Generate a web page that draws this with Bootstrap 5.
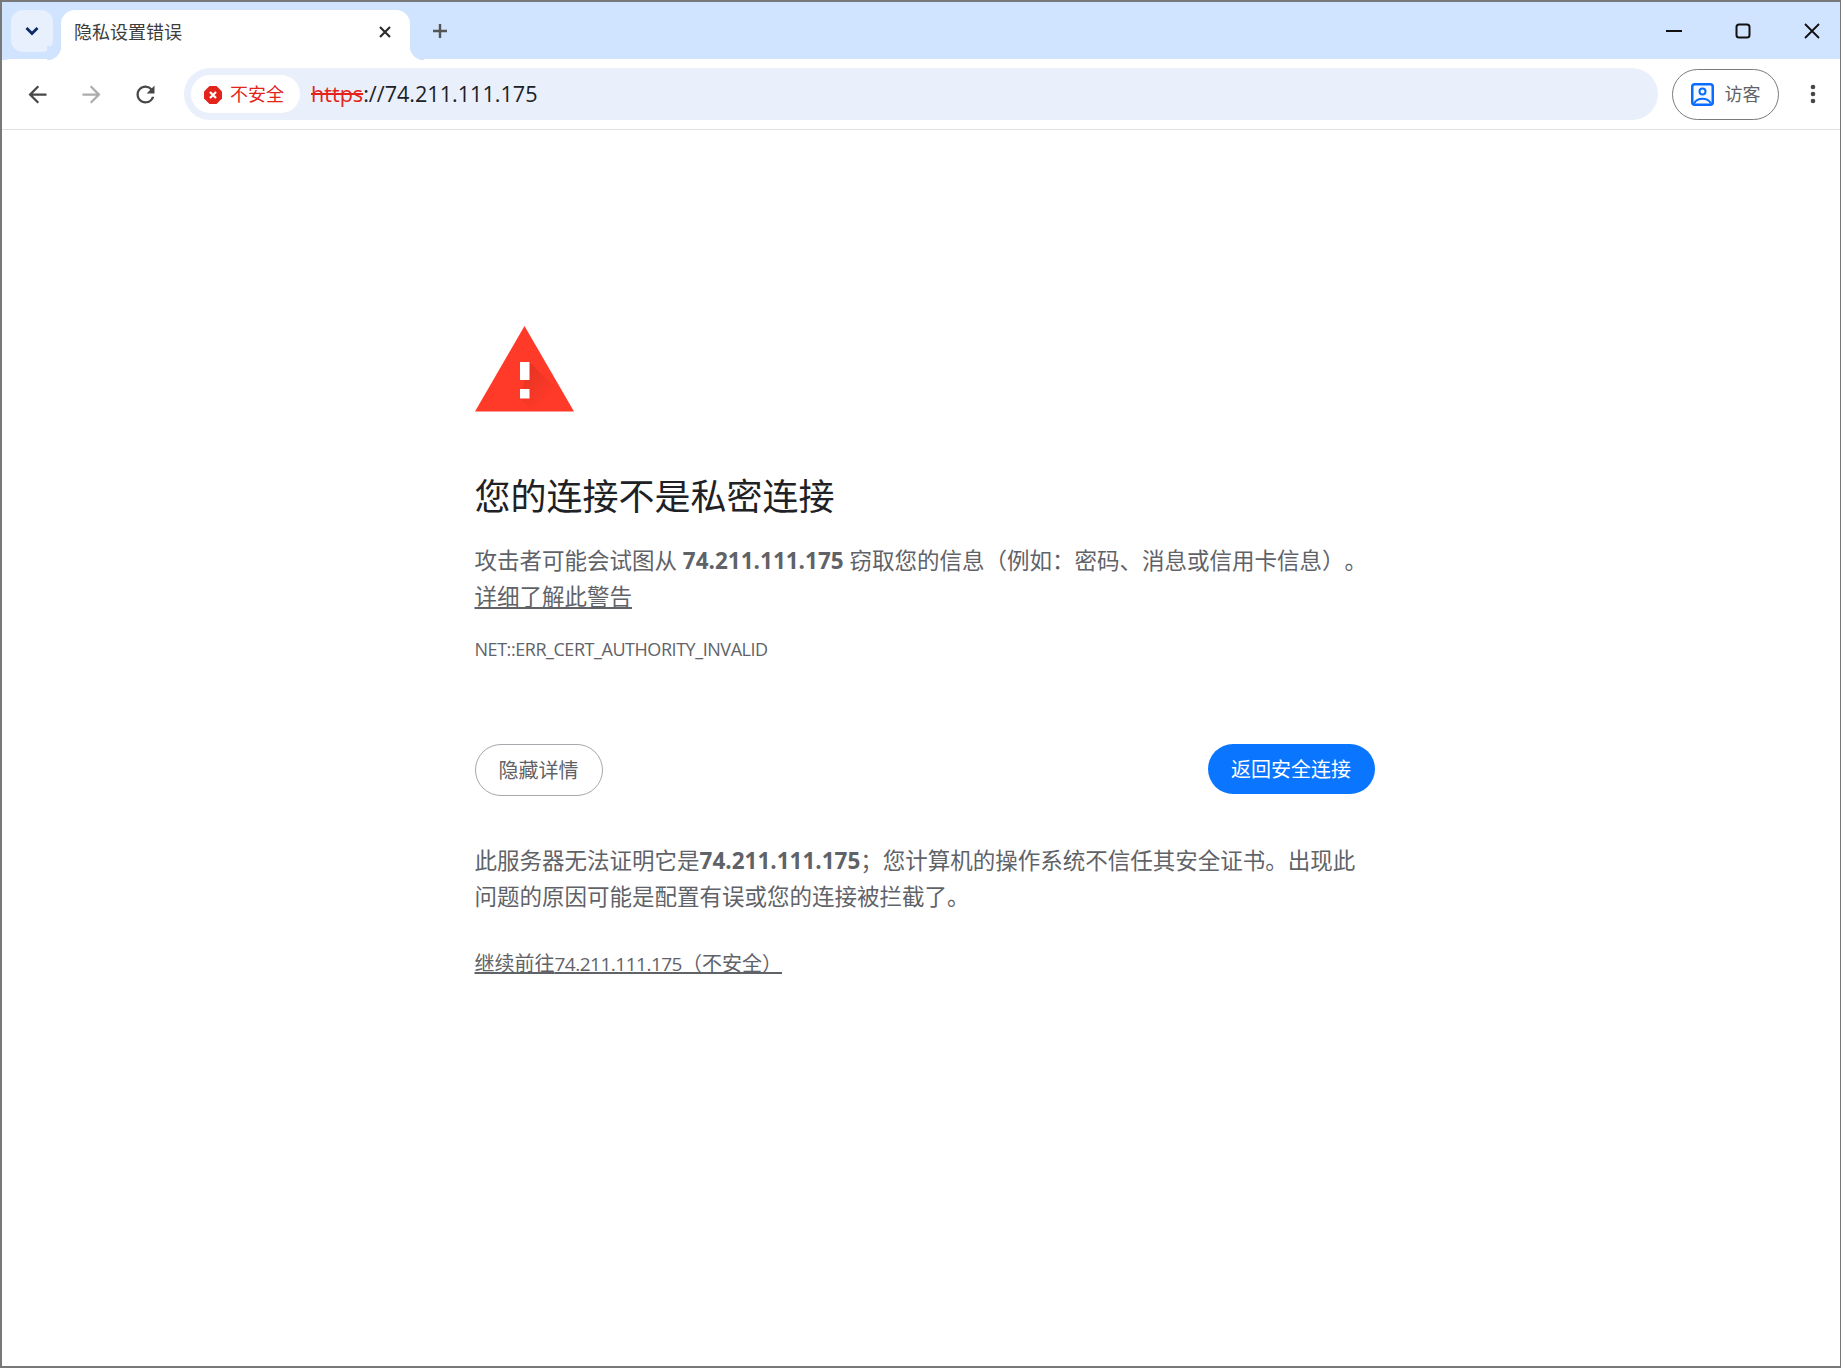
<!DOCTYPE html>
<html lang="zh-CN">
<head>
    <meta charset="UTF-8">
    <meta name="viewport" content="width=device-width, initial-scale=1.0">
    <title>隐私设置错误</title>
    <link href="https://cdn.jsdelivr.net/npm/bootstrap@5.3.0/dist/css/bootstrap.min.css" rel="stylesheet">
    <style>
        html, body { height: 100%; }
        body { font-family: "Open Sans", "Noto Sans CJK SC", sans-serif; color: #5f6368; background: #fff; }
        .win-frame { height: 100vh; border: 2px solid #787878; border-right-width: 1px; }

        /* tab strip */
        .tab-strip { height: 58px; background: #d0e3ff; padding-left: 9px; }
        .tab-menu { width: 42px; height: 42px; margin-top: 8px; background: #e8f0fe; border-radius: 12px; }
        .tab-page { position: relative; width: 349px; height: 50px; margin-top: 8px; margin-left: 8px; padding: 0 18px 5px 13px; background: #fff; border-radius: 14px 14px 0 0; }
        .tab-page::before, .tab-page::after { content: ""; position: absolute; bottom: 0; width: 14px; height: 14px; }
        .tab-page::before { left: -14px; background: radial-gradient(circle at 0 0, #d0e3ff 14px, #fff 14.5px); }
        .tab-page::after { right: -14px; background: radial-gradient(circle at 100% 0, #d0e3ff 14px, #fff 14.5px); }
        .tab-title { font-size: 18px; color: #3c3c3c; }
        .tab-close { margin-bottom: 2px; }
        .tab-new { width: 30px; margin-left: 15px; }
        .win-btns { padding-top: 4px; margin-right: -6px; }
        .win-btn { width: 69px; height: 50px; }

        /* toolbar */
        .tool-bar { height: 71px; border-bottom: 1px solid #e0e0e0; border-top-left-radius: 8px; background: #fff; padding: 0 10px 0 8px; margin-top: -1px; }
        .nav-ico { width: 54px; }
        .omni-box { height: 52px; margin-left: 12px; background: #e9f0fb; border-radius: 26px; padding-left: 7px; }
        .omni-chip { height: 38px; padding: 1px 16px 0 13px; background: #fff; border-radius: 19px; color: #e3241b; font-size: 18px; gap: 8px; }
        .omni-url { margin-left: 11px; font-size: 21.6px; color: #202124; }
        .omni-url s { color: #e3241b; }
        .guest-pill { width: 107px; height: 51px; margin-left: 14px; padding-top: 1px; border: 1.500px solid #7b7b7b; border-radius: 26px; font-size: 18px; color: #5f6368; gap: 11px; }
        .kebab { width: 34px; margin-left: 17px; }

        /* error page */
        .err-page { width: 900px; margin-left: 472.500px; padding-top: 196px; }
        .err-icon { display: block; width: 99px; height: 86px; }
        .err-title { margin: 58px 0 0; font-size: 36px; font-weight: 400; line-height: 54px; color: #202124; }
        .err-text { margin: 19px 0 0; font-size: 22.5px; line-height: 36px; text-spacing-trim: space-all; }
        .err-text a { color: #5f6368; }
        .err-text b, .err-more b { font-weight: 700; }
        .err-code { margin: 16px 0 0; font-size: 18px; line-height: 36px; letter-spacing: -0.45px; }
        .err-btns { margin-top: 77px; }
        .btn-hide { width: 128px; height: 52px; padding: 2px 0 0; border: 1px solid #a5a9ae; font-size: 20px; color: #5f6368; background: #fff; }
        .btn-back { width: 167px; height: 50px; padding: 2px 0 0; border: 0; font-size: 20px; color: #fff; background: #0a76ff; }
        .err-more { margin: 47px 0 0; font-size: 22.5px; line-height: 36px; }
        .err-go { display: inline-block; margin-top: 31px; font-size: 20px; line-height: 36px; color: #5f6368; white-space: pre; }
        .err-go span { font-size: 19px; letter-spacing: -0.5px; }
    </style>
</head>
<body>
    <div class="win-frame d-flex flex-column overflow-hidden">
        <!-- Tab strip -->
        <div class="tab-strip d-flex align-items-start flex-shrink-0">
            <div class="tab-menu d-flex align-items-center justify-content-center">
                <svg width="18" height="18" viewBox="0 0 18 18"><path d="M3.500 6l5.500 5.500L14.500 6" fill="none" stroke="#0b2a66" stroke-width="2.800"/></svg>
            </div>
            <div class="tab-page d-flex align-items-center justify-content-between">
                <span class="tab-title">隐私设置错误</span>
                <svg class="tab-close" width="14" height="14" viewBox="0 0 14 14"><path d="M2 2l10 10M12 2L2 12" stroke="#2d2d2d" stroke-width="2.200"/></svg>
            </div>
            <div class="tab-new d-flex align-items-center justify-content-center h-100">
                <svg width="16" height="16" viewBox="0 0 16 16"><path d="M8 1v14M1 8h14" stroke="#555" stroke-width="2.400"/></svg>
            </div>
            <div class="win-btns d-flex ms-auto">
                <div class="win-btn d-flex align-items-center justify-content-center">
                    <svg width="16" height="16" viewBox="0 0 16 16"><path d="M0 8h16" stroke="#111" stroke-width="2"/></svg>
                </div>
                <div class="win-btn d-flex align-items-center justify-content-center">
                    <svg width="16" height="16" viewBox="0 0 16 16"><rect x="1.500" y="1.500" width="13" height="13" rx="2.500" fill="none" stroke="#111" stroke-width="2"/></svg>
                </div>
                <div class="win-btn d-flex align-items-center justify-content-center">
                    <svg width="16" height="16" viewBox="0 0 16 16"><path d="M1 1l14 14M15 1L1 15" stroke="#111" stroke-width="1.800"/></svg>
                </div>
            </div>
        </div>

        <!-- Toolbar -->
        <div class="tool-bar d-flex align-items-center flex-shrink-0">
            <div class="nav-ico d-flex justify-content-center">
                <svg width="27" height="27" viewBox="0 0 24 24"><path fill="#474747" d="M20 11H7.830l5.590-5.590L12 4l-8 8 8 8 1.410-1.410L7.830 13H20v-2z"/></svg>
            </div>
            <div class="nav-ico d-flex justify-content-center">
                <svg width="27" height="27" viewBox="0 0 24 24"><path fill="#acacac" d="M12 4l-1.410 1.410L16.170 11H4v2h12.170l-5.580 5.590L12 20l8-8z"/></svg>
            </div>
            <div class="nav-ico d-flex justify-content-center">
                <svg width="27" height="27" viewBox="0 0 24 24"><path fill="#474747" d="M17.650 6.350A7.958 7.958 0 0 0 12 4c-4.420 0-7.990 3.580-7.990 8s3.570 8 7.990 8c3.730 0 6.840-2.550 7.730-6h-2.080A5.990 5.990 0 0 1 12 18c-3.310 0-6-2.690-6-6s2.690-6 6-6c1.660 0 3.140.69 4.220 1.780L13 11h7V4l-2.350 2.350z"/></svg>
            </div>
            <div class="omni-box d-flex align-items-center flex-grow-1">
                <div class="omni-chip d-flex align-items-center">
                    <svg width="18" height="18" viewBox="0 0 18 18"><path fill="#e3241b" d="M5.500 0h7L18 5.500v7L12.500 18h-7L0 12.500v-7z"/><path d="M6 6l6 6M12 6l-6 6" stroke="#fff" stroke-width="2.200"/></svg>
                    <span>不安全</span>
                </div>
                <div class="omni-url"><s>https</s>://74.211.111.175</div>
            </div>
            <div class="guest-pill d-flex align-items-center justify-content-center">
                <svg width="23" height="23" viewBox="0 0 23 23"><rect x="1.250" y="1.250" width="20.500" height="20.500" rx="2.500" fill="#f6faff" stroke="#0a6cff" stroke-width="2.500"/><circle cx="11.500" cy="8.500" r="3" fill="none" stroke="#0a6cff" stroke-width="2"/><path d="M3 20.500c1.800-3.200 4.800-4.700 8.500-4.700s6.700 1.500 8.500 4.700" fill="none" stroke="#0a6cff" stroke-width="2"/></svg>
                <span>访客</span>
            </div>
            <div class="kebab d-flex justify-content-center">
                <svg width="6" height="20" viewBox="0 0 6 20"><circle cx="3" cy="3" r="2.300" fill="#474747"/><circle cx="3" cy="10" r="2.300" fill="#474747"/><circle cx="3" cy="17" r="2.300" fill="#474747"/></svg>
            </div>
        </div>

        <!-- Error page -->
        <main class="err-page">
            <svg class="err-icon" viewBox="0 0 99 86">
                <defs>
                    <linearGradient id="errShade" gradientUnits="userSpaceOnUse" x1="50" y1="44" x2="76" y2="70">
                        <stop offset="0" stop-color="#b8281a" stop-opacity="0.35"/>
                        <stop offset="1" stop-color="#b8281a" stop-opacity="0"/>
                    </linearGradient>
                </defs>
                <path fill="#ff3a28" d="M49.500 0L99 85.500H0z"/>
                <path fill="url(#errShade)" d="M54.500 36L90 71.500V85.500H58L45 72.500z"/>
                <rect x="45" y="36" width="9.500" height="18" fill="#fff"/>
                <rect x="45" y="63" width="9.500" height="9.500" fill="#fff"/>
            </svg>
            <h1 class="err-title">您的连接不是私密连接</h1>
            <p class="err-text">攻击者可能会试图从 <b>74.211.111.175</b> 窃取您的信息（例如：密码、消息或信用卡信息）。<br><a href="#">详细了解此警告</a></p>
            <p class="err-code">NET::ERR_CERT_AUTHORITY_INVALID</p>
            <div class="err-btns d-flex justify-content-between align-items-start">
                <button type="button" class="btn btn-hide rounded-pill">隐藏详情</button>
                <button type="button" class="btn btn-back rounded-pill">返回安全连接</button>
            </div>
            <p class="err-more">此服务器无法证明它是<b>74.211.111.175</b>；您计算机的操作系统不信任其安全证书。出现此问题的原因可能是配置有误或您的连接被拦截了。</p>
            <a href="#" class="err-go">继续前往<span>74.211.111.175</span>（不安全）</a>
        </main>
    </div>

    <script src="https://cdn.jsdelivr.net/npm/bootstrap@5.3.0/dist/js/bootstrap.bundle.min.js"></script>
</body>
</html>
